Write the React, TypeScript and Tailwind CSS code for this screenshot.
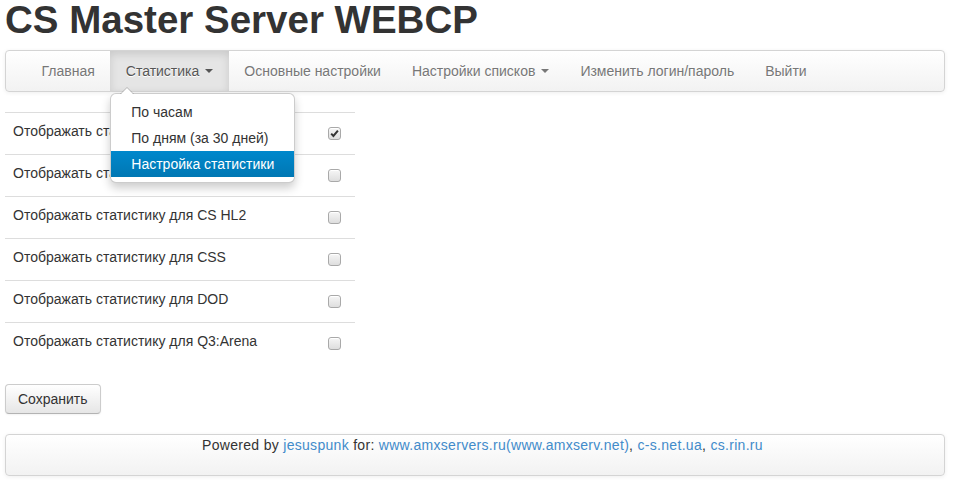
import { useState } from 'react'

const font = "font-['Liberation_Sans',Arial,Helvetica,sans-serif]"

const navItems = [
  { label: 'Главная' },
  { label: 'Статистика', caret: true, active: true },
  { label: 'Основные настройки' },
  { label: 'Настройки списков', caret: true },
  { label: 'Изменить логин/пароль' },
  { label: 'Выйти' },
]

const statsMenu = ['По часам', 'По дням (за 30 дней)', 'Настройка статистики']

const games = [
  { name: 'CS 1.6', on: true },
  { name: 'CS:CZ', on: false },
  { name: 'CS HL2', on: false },
  { name: 'CSS', on: false },
  { name: 'DOD', on: false },
  { name: 'Q3:Arena', on: false },
]

function Caret({ dark }: { dark?: boolean }) {
  return (
    <span
      className={`ml-[6px] mt-[8px] inline-block h-0 w-0 border-x-4 border-t-4 border-x-transparent align-top ${
        dark ? 'border-t-[#555]' : 'border-t-[#777]'
      }`}
    />
  )
}

function Check({ checked }: { checked: boolean }) {
  return (
    <span className="relative block h-[13px] w-[13px] rounded-[3px] border border-[#a9a9a9] bg-gradient-to-b from-[#f6f6f6] to-[#dedede] shadow-[inset_0_1px_0_#fff]">
      {checked && (
        <svg viewBox="0 0 11 11" className="absolute left-0 top-0 h-[11px] w-[11px]">
          <path d="M2.2 5.6 L4.4 7.9 L8.9 2.6" fill="none" stroke="#333" strokeWidth="2" />
        </svg>
      )}
    </span>
  )
}

function StatsDropdown() {
  return (
    <div className="absolute left-0 top-full z-10 mt-[2px] rounded-[6px] border border-[rgba(0,0,0,0.2)] bg-white py-[5px] shadow-[0_5px_10px_rgba(0,0,0,0.2)]">
      <span className="absolute left-[9px] top-[-7px] h-0 w-0 border-x-[7px] border-b-[7px] border-x-transparent border-b-[rgba(0,0,0,0.2)]" />
      <span className="absolute left-[10px] top-[-6px] h-0 w-0 border-x-[6px] border-b-[6px] border-x-transparent border-b-white" />
      {statsMenu.map((item, i) => {
        const current = i === statsMenu.length - 1
        return (
          <div
            key={item}
            className={`whitespace-nowrap px-5 py-[3px] text-sm leading-5 ${
              current ? 'bg-gradient-to-b from-[#0088cc] to-[#0077b3] text-white' : 'text-[#333]'
            }`}
          >
            {item}
          </div>
        )
      })}
    </div>
  )
}

export default function App() {
  const [open] = useState(true)

  return (
    <div className={`${font} min-h-[488px] bg-white text-sm leading-5 text-[#333]`}>
      <div className="ml-[5px] w-[940px]">
        <h1 className="h-10 text-[38.5px] font-bold leading-10 text-[#333]">CS Master Server WEBCP</h1>

        <div className="mt-[10px] flex min-h-[42px] rounded border border-[#d4d4d4] bg-gradient-to-b from-white to-[#f2f2f2] px-5 shadow-[0_1px_4px_rgba(0,0,0,0.065)]">
          <ul className="flex">
            {navItems.map((item) => (
              <li key={item.label} className="relative">
                <a
                  className={`block px-[15.5px] py-[10px] leading-5 [text-shadow:0_1px_0_#fff] ${
                    item.active
                      ? 'bg-[#e5e5e5] text-[#555] shadow-[inset_0_3px_8px_rgba(0,0,0,0.125)]'
                      : 'text-[#777]'
                  }`}
                >
                  {item.label}
                  {item.caret && <Caret dark={item.active} />}
                </a>
                {item.active && open && <StatsDropdown />}
              </li>
            ))}
          </ul>
        </div>

        <div className="mt-5 w-[350px]">
          {games.map((g) => (
            <div key={g.name} className="flex h-[42px] border-t border-[#ddd]">
              <div className="flex-1 px-2 pt-2 leading-5">Отображать статистику для {g.name}</div>
              <div className="pr-[14px] pt-[14px]">
                <Check checked={g.on} />
              </div>
            </div>
          ))}
        </div>

        <button className="mt-5 h-[30px] rounded border border-[#ccc] border-b-[#b3b3b3] bg-gradient-to-b from-white to-[#e6e6e6] px-3 leading-5 text-[#333] shadow-[inset_0_1px_0_rgba(255,255,255,0.2),0_1px_2px_rgba(0,0,0,0.05)]">
          Сохранить
        </button>

        <div className="mt-5 min-h-[42px] rounded border border-[#d4d4d4] bg-gradient-to-b from-white to-[#f2f2f2] pl-[35px] pr-5 text-center tracking-[0.3px] shadow-[0_1px_4px_rgba(0,0,0,0.065)]">
          Powered by <a className="text-[#428bca]">jesuspunk</a> for:{' '}
          <a className="text-[#428bca]">www.amxservers.ru(www.amxserv.net)</a>,{' '}
          <a className="text-[#428bca]">c-s.net.ua</a>, <a className="text-[#428bca]">cs.rin.ru</a>
        </div>
      </div>
    </div>
  )
}
